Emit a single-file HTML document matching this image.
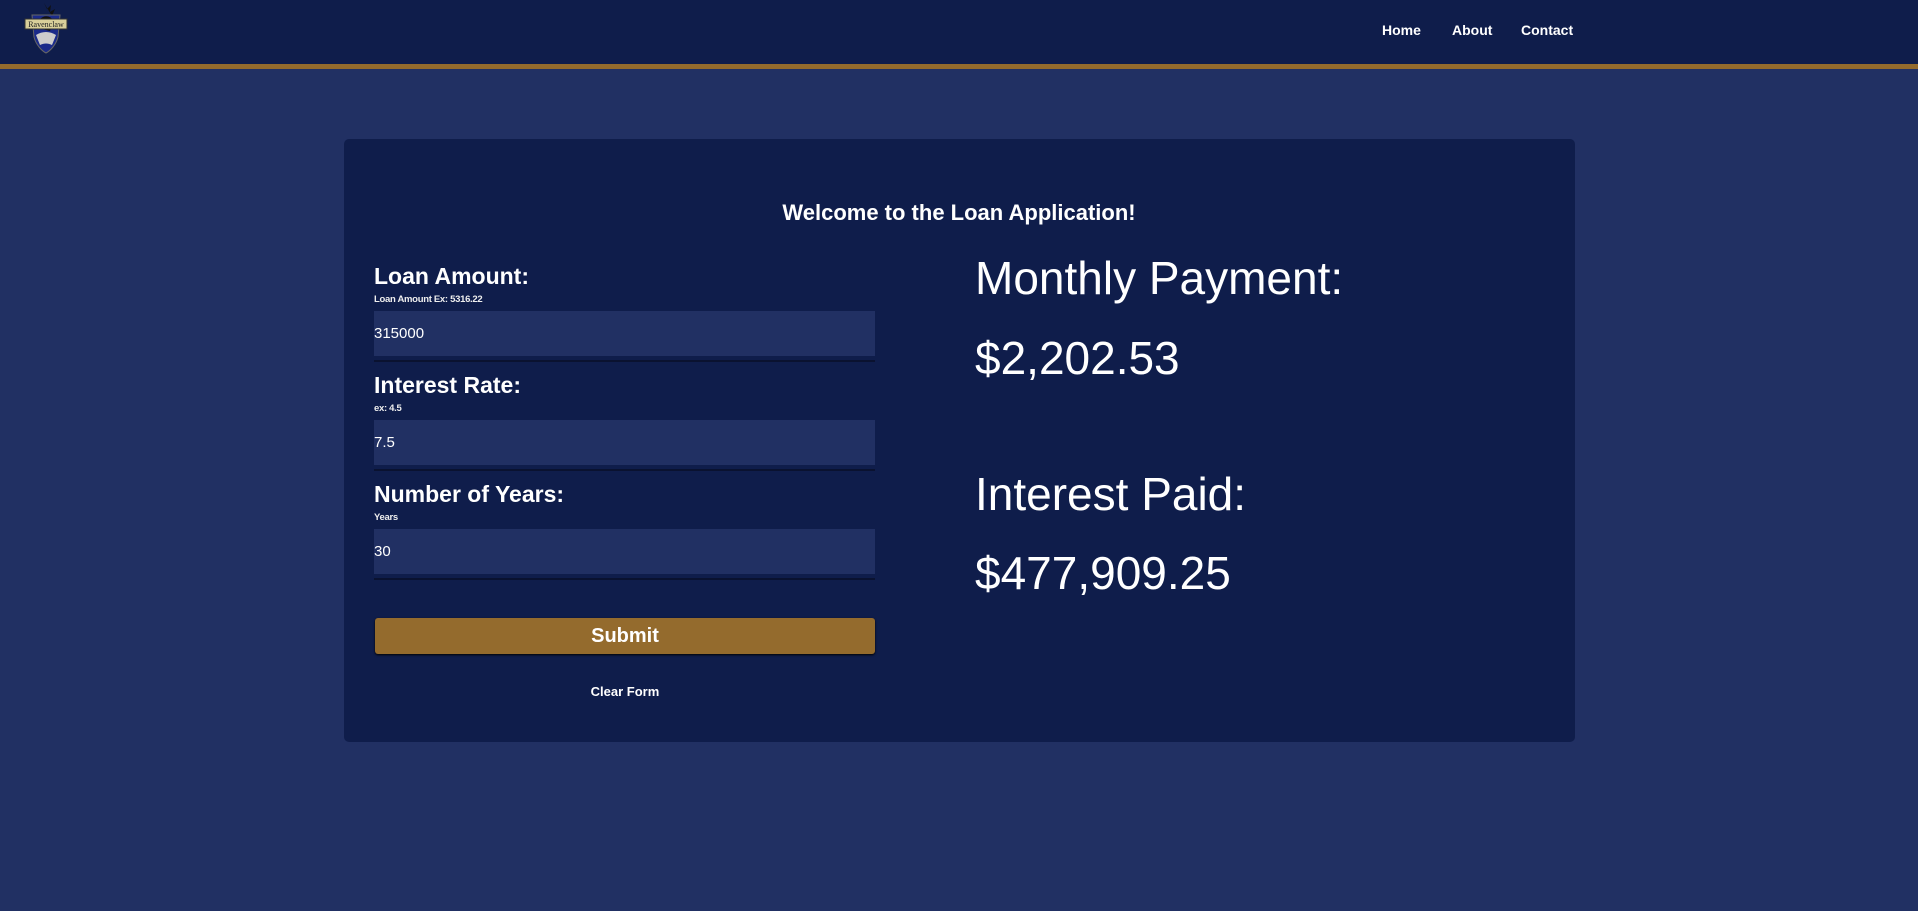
<!DOCTYPE html>
<html><head><meta charset="utf-8"><style>
*{margin:0;padding:0;box-sizing:border-box}
body{width:1918px;height:911px;background:#213063;font-family:"Liberation Sans",Arial,sans-serif;color:#fff;position:relative;overflow:hidden}
.nav{position:absolute;left:0;top:0;width:1918px;height:64px;background:#0f1d4b}
.bar{position:absolute;left:0;top:64px;width:1918px;height:5px;background:#946b2d}
.nl{position:absolute;top:22px;font-size:14px;font-weight:bold}
.card{position:absolute;left:344px;top:139px;width:1231px;height:603px;background:#0f1d4b;border-radius:5px}
.a{position:absolute;white-space:nowrap}
.lab{font-size:23px;font-weight:bold}
.sm{font-size:9.5px;font-weight:bold;letter-spacing:-.3px;color:#eee}
.inp{position:absolute;left:374px;width:501px;height:45px;background:#213063;font-size:15px;line-height:45px}
.ul{position:absolute;left:374px;width:501px;height:2px;background:#0a1230}
.big{font-size:46px}
</style></head><body>
<div class="nav"></div><div class="bar"></div>
<svg class="a" style="left:24px;top:3px" width="44" height="52" viewBox="0 0 44 52">
<path d="M20 0l3 6 4-4-1 7 5-3-3 7z" fill="#111"/>
<path d="M8 12h28l-2 22c-2 8-8 14-12 16-4-2-10-8-12-16z" fill="#1a2a8a" stroke="#666" stroke-width="1"/>
<path d="M12 32c6-4 14-4 20 0l-4 10c-4-2-8-2-12 0z" fill="#ccc"/>
<path d="M16 16c4-4 10-4 14 2l-4 10-8-2z" fill="#111"/>
<rect x="1" y="16" width="42" height="10" fill="#d9cf9a" stroke="#333" stroke-width="1"/>
<text x="22" y="24" font-size="8" text-anchor="middle" fill="#222" font-family="Liberation Serif,serif">Ravenclaw</text>
</svg>
<div class="nl" style="left:1382px">Home</div>
<div class="nl" style="left:1452px">About</div>
<div class="nl" style="left:1521px">Contact</div>
<div class="card"></div>
<div class="a" style="left:0;width:1918px;text-align:center;top:200px;font-size:22px;font-weight:bold">Welcome to the Loan Application!</div>

<div class="a lab" style="left:374px;top:263px">Loan Amount:</div>
<div class="a sm" style="left:374px;top:294px">Loan Amount Ex: 5316.22</div>
<div class="inp" style="top:311px">315000</div><div class="ul" style="top:360px"></div>

<div class="a lab" style="left:374px;top:372px">Interest Rate:</div>
<div class="a sm" style="left:374px;top:403px">ex: 4.5</div>
<div class="inp" style="top:420px">7.5</div><div class="ul" style="top:469px"></div>

<div class="a lab" style="left:374px;top:481px">Number of Years:</div>
<div class="a sm" style="left:374px;top:512px">Years</div>
<div class="inp" style="top:529px">30</div><div class="ul" style="top:578px"></div>

<div class="a" style="left:375px;top:618px;width:500px;height:36px;background:#946b2d;border-radius:3px;box-shadow:0 1px 2px #000;text-align:center;font-size:20px;font-weight:bold;line-height:36px">Submit</div>
<div class="a" style="left:375px;width:500px;text-align:center;top:684px;font-size:13px;font-weight:bold">Clear Form</div>

<div class="a big" style="left:975px;top:251px">Monthly Payment:</div>
<div class="a big" style="left:975px;top:331px">$2,202.53</div>
<div class="a big" style="left:975px;top:467px">Interest Paid:</div>
<div class="a big" style="left:975px;top:546px">$477,909.25</div>
</body></html>
